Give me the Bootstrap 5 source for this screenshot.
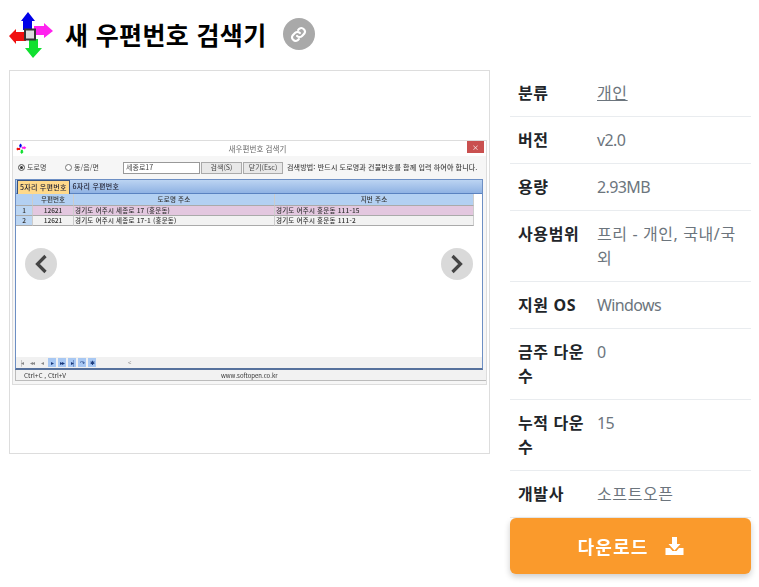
<!DOCTYPE html>
<html lang="ko"><head><meta charset="utf-8"><title>새 우편번호 검색기</title>
<link rel="stylesheet" href="https://cdn.jsdelivr.net/npm/bootstrap@5.3.0/dist/css/bootstrap.min.css">
<style>
html,body{height:587px;overflow:hidden}
body{font-family:"Noto Sans","Noto Sans CJK KR",sans-serif;color:#212529;background:#fff}
.pg{padding:7px 8px 0 9px}
.hd{height:54px;margin-left:-1px}
.logo{filter:blur(.4px);flex:none}
.hd h1{font-family:"Noto Sans CJK KR",sans-serif;font-size:25px;letter-spacing:.35px;font-weight:700;margin:0 0 0 9px;color:#000;line-height:1}
.lnk{width:32px;height:32px;background:#a9a9a9;margin-left:16px}
.lay{gap:20px;margin-top:9px}
.shotbox{width:481px;height:384px;border:1px solid #ddd;position:relative;flex:none}
.win{width:475px;height:245px;margin:69px 0 0 2px;border:1px solid #ddd;filter:blur(.35px);font-family:"Noto Sans CJK KR",sans-serif;font-size:7px;color:#444;line-height:1;background:#f6f6f6}
.tb{height:15px;background:#fff;position:relative;padding-left:16px}
.tb .tt{font-size:7.500px;color:#666;letter-spacing:.1px}
.cls{width:17px;height:12px;background:#c9504f;color:#fff;font-size:7px;position:absolute;right:2px;top:0}
.tools{height:23px;padding:0 5px}
.rd{width:7px;height:7px;border:1px solid #777;border-radius:50%;background:#fff;display:inline-block;margin-right:2px;vertical-align:-1px}
.rd.on{background:#333;box-shadow:inset 0 0 0 1px #fff}
.inp{width:77px;height:12px;border:1px solid #999;background:#fff;margin:0 1px 0 -1px;padding-left:2px}
.bt{height:12px;border:1px solid #aaa;background:#e8e8e8;margin-right:1px;justify-content:center}
.how{letter-spacing:.15px;font-weight:500;margin-left:3px}
.pane{height:191px;background:#fff;border:1px solid #6d8fc4;border-bottom:2px solid #56719c;position:relative;margin:0 3px 0 2px}
.tabs{height:14px;background:linear-gradient(#bcd4f2,#8fb2e3);border-bottom:1px solid #5a82c0;gap:3px;padding-left:1px;color:#223;letter-spacing:.25px;font-weight:500}
.tb1{height:14px;background:#ffd98a;border:1px solid #39527e;border-bottom:0;padding:0 2px;margin-top:1px}
.grid{width:458px;font-size:6.500px;color:#333;font-weight:500}
.gr{display:flex;height:10px}
.gr>div{border-right:1px solid #ccc;border-bottom:1px solid #aaa;overflow:hidden;white-space:nowrap;line-height:9px}
.c0{width:17px;text-align:center;background:#bcd6f3;flex:none}
.c1{width:41px;text-align:center;flex:none}
.c2{width:201px;flex:none;padding-left:1px;letter-spacing:.2px}
.c3{flex:1;padding-left:1px;letter-spacing:.2px}
.gh{height:12px}
.gh>div{background:#b3d0f2;text-align:center;line-height:11px;padding:0}
.pk>div:not(.c0){background:#e3c7df}
.wh>div:not(.c0){background:#f2f2f2}
.navbar-mock{position:absolute;left:0;right:0;bottom:0;height:11px;background:#f1f1f1;gap:2px;padding-left:2px;font-size:6px;color:#888}
.nb{width:8px;height:9px;text-align:center;line-height:9px;overflow:hidden;letter-spacing:-1px}
.nb.on{background:#a8c8f3;color:#1a3a7c}
.st{height:11px;background:#f2f2f2;color:#333;position:relative;border-bottom:1px solid #bbb;border-left:1px solid #bbb;padding-top:2px;margin-left:2px}
.st span:first-child{margin-left:8px;font-size:6.500px}
.st span:last-child{position:absolute;left:205px;top:3px;font-size:6px}
.arw{width:32px;height:32px;background:rgba(215,215,215,.95);position:absolute;top:177px}
.arw.l{left:15px}.arw.r{right:16px}
.info{width:241px;flex:none}
.info table{margin:0;width:241px;table-layout:fixed}
.info th,.info td{padding:11px 8px;line-height:24px;font-size:16px;border-bottom:1px solid #e9ecef;vertical-align:top;letter-spacing:.6px}
.info th{width:79px;font-weight:700;color:#212529;padding-right:0}
.info td{color:#6c757d}
.info td a{color:#6c757d}
.info .lat{letter-spacing:-.6px}
.dl{position:fixed;left:510px;top:518px;width:241px;height:56px;background:#fa9a2c;border:0;border-radius:6px;color:#fff;font-weight:700;font-size:18px;letter-spacing:1.200px;box-shadow:0 3px 6px rgba(0,0,0,.2);font-family:"Noto Sans CJK KR",sans-serif}
.dl:hover{background:#fa9a2c;color:#fff}
</style></head>
<body>
<div class="pg">
<div class="hd d-flex align-items-center">
<svg class="logo" width="48" height="48" viewBox="0 0 48 48"><path d="M20 2l7 9h-3v9h-9v-9h-2z" fill="#0000e8"/><path d="M45 21l-9 7v-3h-10v-9h10v-3z" fill="#ff22ee"/><path d="M1 26l7-7v3h10v9H8v3z" fill="#f01010"/><path d="M25 48l-8-10h4v-9h9v9h4z" fill="#10e030"/><rect x="17" y="19.500" width="10" height="10" fill="#ddd" stroke="#333" stroke-width="2"/></svg>
<h1>새 우편번호 검색기</h1>
<div class="lnk rounded-circle d-flex align-items-center justify-content-center"><svg width="17" height="17" viewBox="0 0 24 24" fill="none" stroke="#fff" stroke-width="3" stroke-linecap="round"><path d="M10 14a5 5 0 0 0 7 0l3-3a5 5 0 0 0-7-7l-1.500 1.500"/><path d="M14 10a5 5 0 0 0-7 0l-3 3a5 5 0 0 0 7 7l1.500-1.500"/></svg></div>
</div>
<div class="lay d-flex">
<div class="shotbox">
<div class="win">
<div class="tb d-flex align-items-center justify-content-center"><svg width="11" height="11" viewBox="0 0 48 48" class="position-absolute" style="left:3px;top:2px"><path d="M20 2l7 9h-3v9h-9v-9h-2z" fill="#0000e8"/><path d="M45 21l-9 7v-3h-10v-9h10v-3z" fill="#ff22ee"/><path d="M1 26l7-7v3h10v9H8v3z" fill="#f01010"/><path d="M25 48l-8-10h4v-9h9v9h4z" fill="#10e030"/></svg><span class="tt">새우편번호 검색기</span><span class="cls d-flex align-items-center justify-content-center">×</span></div>
<div class="tools d-flex align-items-center">
<span style="width:47px"><i class="rd on"></i>도로명</span><span style="width:59px"><i class="rd"></i>동/읍/면</span>
<span class="inp d-flex align-items-center">세종로17</span><span class="bt d-flex align-items-center" style="width:41px">검색(S)</span><span class="bt d-flex align-items-center" style="width:40px">닫기(Esc)</span><span class="how">검색방법: 반드시 도로명과 건물번호를 함께 입력 하여야 합니다.</span>
</div>
<div class="pane">
<div class="tabs d-flex align-items-center"><span class="tb1 d-flex align-items-center">5자리 우편번호</span><span>6자리 우편번호</span></div>
<div class="grid">
<div class="gr gh"><div class="c0"></div><div class="c1">우편번호</div><div class="c2">도로명 주소</div><div class="c3">지번 주소</div></div>
<div class="gr pk"><div class="c0">1</div><div class="c1">12621</div><div class="c2">경기도 여주시 세종로 17 (홍문동)</div><div class="c3">경기도 여주시 홍문동 111-15</div></div>
<div class="gr wh"><div class="c0">2</div><div class="c1">12621</div><div class="c2">경기도 여주시 세종로 17-1 (홍문동)</div><div class="c3">경기도 여주시 홍문동 111-2</div></div>
</div>
<div class="navbar-mock d-flex align-items-center"><span class="nb">|◂</span><span class="nb">◂◂</span><span class="nb">◂</span><span class="nb on">▸</span><span class="nb on">▸▸</span><span class="nb on">▸|</span><span class="nb on">↷</span><span class="nb on">✱</span><span style="margin-left:30px">&lt;</span></div>
</div>
<div class="st"><span>Ctrl+C , Ctrl+V</span><span>www.softopen.co.kr</span></div>
</div>
<div class="arw l rounded-circle d-flex align-items-center justify-content-center"><svg width="14" height="20" viewBox="0 0 14 20" fill="none" stroke="#444" stroke-width="3.200"><path d="M11.500 2L3.500 10l8 8"/></svg></div>
<div class="arw r rounded-circle d-flex align-items-center justify-content-center"><svg width="14" height="20" viewBox="0 0 14 20" fill="none" stroke="#444" stroke-width="3.200"><path d="M2.500 2l8 8-8 8"/></svg></div>
</div>
<div class="info">
<table class="table"><tbody>
<tr><th>분류</th><td><a href="#">개인</a></td></tr>
<tr><th>버전</th><td class="lat">v2.0</td></tr>
<tr><th>용량</th><td class="lat">2.93MB</td></tr>
<tr><th>사용범위</th><td>프리 - 개인, 국내/국외</td></tr>
<tr><th>지원 OS</th><td class="lat">Windows</td></tr>
<tr><th>금주 다운수</th><td class="lat">0</td></tr>
<tr><th>누적 다운수</th><td class="lat">15</td></tr>
<tr><th>개발사</th><td>소프트오픈</td></tr>
</tbody></table>
</div>
</div>
</div>
<button class="btn dl d-flex align-items-center justify-content-center" type="button"><span>다운로드</span><svg class="ms-3" width="19" height="18" viewBox="0 0 18 18" fill="#fff"><path d="M6.500 0h5v7h3.500L9 13.500 3 7h3.500z"/><path d="M0 11h4.500L7 14h4l2.500-3H18v7H0z"/></svg></button>
</body></html>
